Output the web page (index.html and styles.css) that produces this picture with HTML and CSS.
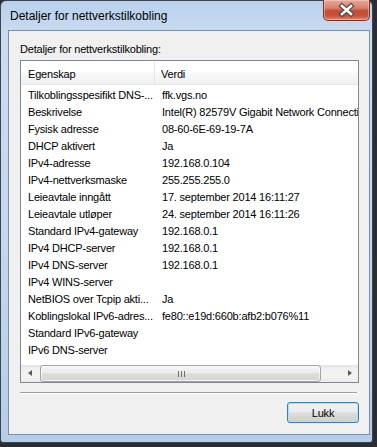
FILE: index.html
```html
<!DOCTYPE html>
<html lang="no">
<head>
    <meta charset="UTF-8">
    <meta name="viewport" content="width=device-width, initial-scale=1.0">
    <title>Detaljer for nettverkstilkobling</title>
    <link rel="stylesheet" href="styles.css">
</head>
<body>

    <div class="window">
        <!-- Tittellinje -->
        <div class="titlebar">
            <span class="title">Detaljer for nettverkstilkobling</span>
            <button class="close" aria-label="Lukk">
                <svg width="47" height="21" viewBox="0 0 47 21">
                    <path d="M19 7 L28 15 M28 7 L19 15" stroke="#4b4b4b" stroke-width="5" stroke-linecap="square" fill="none"/>
                    <path d="M19 7 L28 15 M28 7 L19 15" stroke="#ffffff" stroke-width="2.6" stroke-linecap="square" fill="none"/>
                </svg>
            </button>
        </div>

        <!-- Innhold -->
        <div class="client">
            <div class="group-label">Detaljer for nettverkstilkobling:</div>

            <div class="listview">
                <div class="lv-header">
                    <div class="col col-name">Egenskap</div>
                    <div class="col col-value">Verdi</div>
                </div>
                <div class="lv-body">
                    <div class="row"><span class="col col-name">Tilkoblingsspesifikt DNS-...</span><span class="col col-value">ffk.vgs.no</span></div>
                    <div class="row"><span class="col col-name">Beskrivelse</span><span class="col col-value">Intel(R) 82579V Gigabit Network Connection</span></div>
                    <div class="row"><span class="col col-name">Fysisk adresse</span><span class="col col-value">08-60-6E-69-19-7A</span></div>
                    <div class="row"><span class="col col-name">DHCP aktivert</span><span class="col col-value">Ja</span></div>
                    <div class="row"><span class="col col-name">IPv4-adresse</span><span class="col col-value">192.168.0.104</span></div>
                    <div class="row"><span class="col col-name">IPv4-nettverksmaske</span><span class="col col-value">255.255.255.0</span></div>
                    <div class="row"><span class="col col-name">Leieavtale inngått</span><span class="col col-value">17. september 2014 16:11:27</span></div>
                    <div class="row"><span class="col col-name">Leieavtale utløper</span><span class="col col-value">24. september 2014 16:11:26</span></div>
                    <div class="row"><span class="col col-name">Standard IPv4-gateway</span><span class="col col-value">192.168.0.1</span></div>
                    <div class="row"><span class="col col-name">IPv4 DHCP-server</span><span class="col col-value">192.168.0.1</span></div>
                    <div class="row"><span class="col col-name">IPv4 DNS-server</span><span class="col col-value">192.168.0.1</span></div>
                    <div class="row"><span class="col col-name">IPv4 WINS-server</span><span class="col col-value"></span></div>
                    <div class="row"><span class="col col-name">NetBIOS over Tcpip akti...</span><span class="col col-value">Ja</span></div>
                    <div class="row"><span class="col col-name">Koblingslokal IPv6-adres...</span><span class="col col-value">fe80::e19d:660b:afb2:b076%11</span></div>
                    <div class="row"><span class="col col-name">Standard IPv6-gateway</span><span class="col col-value"></span></div>
                    <div class="row"><span class="col col-name">IPv6 DNS-server</span><span class="col col-value"></span></div>
                </div>
                <div class="hscroll">
                    <div class="sb-arrow sb-left"></div>
                    <div class="sb-track">
                        <div class="sb-thumb"><span class="grip"></span></div>
                    </div>
                    <div class="sb-arrow sb-right"></div>
                </div>
            </div>

            <div class="separator"></div>

            <div class="actions">
                <button class="btn">Lukk</button>
            </div>
        </div>
    </div>

</body>
</html>
```

FILE: styles.css
```css
/* --- Base --- */
* {
    margin: 0;
    padding: 0;
    box-sizing: border-box;
}

body {
    background-color: #2b2d30;
    font-family: 'Liberation Sans', Arial, sans-serif;
    color: #000000;
}

/* --- Vindusramme --- */
.window {
    width: 373px;
    height: 443px;
    border: 1px solid #3a4452;
    border-radius: 6px 6px 3px 3px;
    padding: 0 2px 7px 7px;
    background: linear-gradient(180deg, #b9d1ec 0%, #cbdcf1 8%, #c2d7ee 60%, #b6cde8 100%);
    display: flex;
    flex-direction: column;
}

.titlebar {
    height: 29px;
    display: flex;
    justify-content: space-between;
    align-items: flex-start;
}

.title {
    padding: 8px 0 0 2px;
    font-size: 12px;
    line-height: 15px;
    color: #000000;
}

.close {
    width: 47px;
    height: 21px;
    margin-top: -1px;
    border: 1px solid #7a3226;
    border-top: none;
    border-radius: 0 0 5px 5px;
    background: linear-gradient(180deg, #e7a898 0%, #d8806c 40%, #c44a33 55%, #c9533a 80%, #dc8a6c 100%);
    box-shadow: inset 0 0 0 1px rgba(255, 220, 210, 0.45);
    display: block;
    cursor: pointer;
}

.close svg {
    display: block;
    margin: -1px 0 0 -1px;
}

/* --- Klientområde --- */
.client {
    flex: 1;
    background-color: #f0f0f0;
    border: 1px solid #7b8fa8;
    padding: 11px 10px 11px 11px;
    font-size: 11px;
    letter-spacing: -0.2px;
}

.group-label {
    line-height: 15px;
    margin-bottom: 3px;
}

/* --- Listevisning --- */
.listview {
    width: 339px;
    height: 323px;
    border: 1px solid #828790;
    background-color: #ffffff;
    overflow: hidden;
}

.lv-header {
    display: flex;
    height: 24px;
    padding-top: 3px;
    line-height: 20px;
    background: linear-gradient(180deg, #ffffff 0%, #ffffff 45%, #f6f7f8 55%, #f1f2f4 100%);
    border-bottom: 1px solid #e5e5e5;
}

.lv-header .col-name {
    border-right: 1px solid #e3e6ea;
    margin-top: -3px;
    padding-top: 3px;
    height: 23px;
}

.col {
    white-space: nowrap;
    overflow: hidden;
    flex-shrink: 0;
}

.col-name {
    width: 134px;
    padding-left: 7px;
}

.col-value {
    width: 400px;
    padding-left: 7px;
}

.lv-header .col-value {
    padding-left: 6px;
}

.lv-body {
    height: 280px;
    padding-top: 2px;
    overflow: hidden;
}

.row {
    display: flex;
    height: 17px;
    line-height: 17px;
}

/* --- Horisontal rullefelt --- */
.hscroll {
    display: flex;
    height: 17px;
    background: linear-gradient(180deg, #e3e3e3 0%, #efefef 20%, #f3f3f3 60%, #ececec 100%);
}

.sb-arrow {
    width: 17px;
    position: relative;
}

.sb-arrow::after {
    content: '';
    position: absolute;
    top: 5px;
    border-top: 3.5px solid transparent;
    border-bottom: 3.5px solid transparent;
}

.sb-left::after {
    left: 7px;
    border-right: 4px solid #5a5a5a;
}

.sb-right::after {
    left: 7px;
    border-left: 4px solid #5a5a5a;
}

.sb-track {
    flex: 1;
    padding: 0 0 0 2px;
}

.sb-thumb {
    width: 281px;
    height: 17px;
    border: 1px solid #a3a3a3;
    border-radius: 3px;
    background: linear-gradient(180deg, #f5f5f5 0%, #ececec 45%, #dcdcdc 55%, #d4d4d4 100%);
    box-shadow: inset 0 0 0 1px rgba(255, 255, 255, 0.7);
    display: flex;
    justify-content: center;
    align-items: center;
}

.grip {
    width: 7px;
    height: 6px;
    background: repeating-linear-gradient(90deg, #6e6e6e 0, #6e6e6e 1px, transparent 1px, transparent 3px);
    margin-left: 2px;
}

/* --- Skillelinje og knapp --- */
.separator {
    width: 337px;
    margin-top: 9px;
    border-top: 1px solid #a0a0a0;
    border-bottom: 1px solid #ffffff;
}

.actions {
    display: flex;
    justify-content: flex-end;
    margin-top: 8px;
    width: 339px;
}

.btn {
    width: 72px;
    height: 21px;
    border: 1px solid #3c7fb1;
    border-radius: 3px;
    background: linear-gradient(180deg, #f2f2f2 0%, #ebebeb 48%, #dddddd 52%, #cfcfcf 100%);
    box-shadow: inset 0 0 0 1px #a9e2f7;
    font-family: 'Liberation Sans', Arial, sans-serif;
    font-size: 11px;
    letter-spacing: -0.2px;
    color: #000000;
    cursor: pointer;
}
```
